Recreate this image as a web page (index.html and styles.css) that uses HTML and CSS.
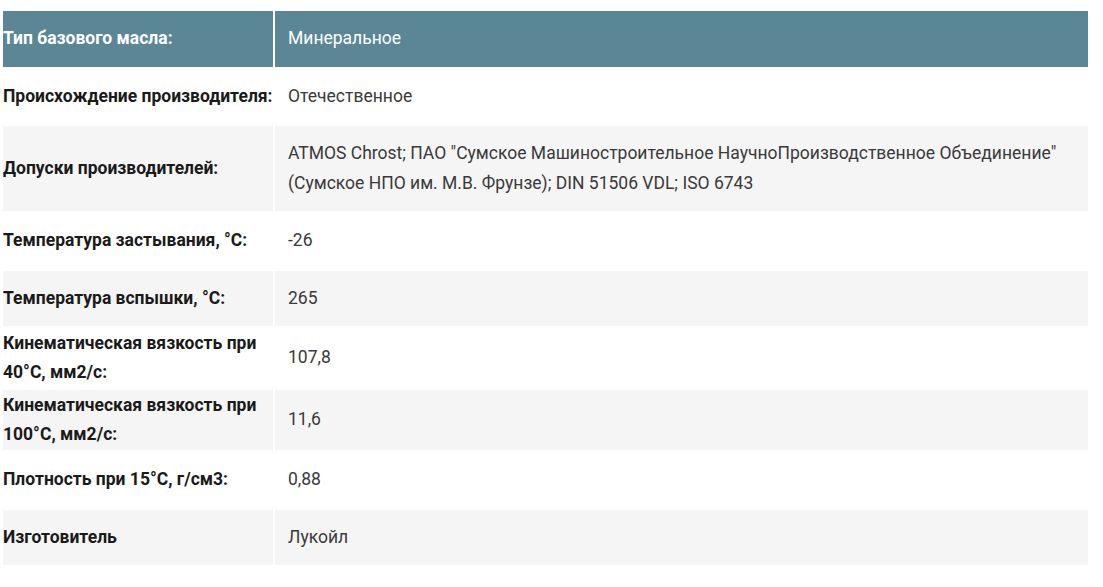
FILE: index.html
```html
<!DOCTYPE html>
<html lang="ru">
<head>
    <meta charset="UTF-8">
    <meta name="viewport" content="width=device-width, initial-scale=1.0">
    <title>Характеристики масла</title>
    <link rel="stylesheet" href="styles.css">
</head>
<body>
    <table class="specs">
        <tr class="specs-head">
            <th>Тип базового масла:</th>
            <td>Минеральное</td>
        </tr>
        <tr>
            <th>Происхождение производителя:</th>
            <td>Отечественное</td>
        </tr>
        <tr class="alt">
            <th>Допуски производителей:</th>
            <td>ATMOS Chrost; ПАО "Сумское Машиностроительное НаучноПроизводственное Объединение" (Сумское НПО им. М.В. Фрунзе); DIN 51506 VDL; ISO 6743</td>
        </tr>
        <tr>
            <th>Температура застывания, °С:</th>
            <td>-26</td>
        </tr>
        <tr class="alt">
            <th>Температура вспышки, °С:</th>
            <td>265</td>
        </tr>
        <tr>
            <th>Кинематическая вязкость при 40°С, мм2/с:</th>
            <td>107,8</td>
        </tr>
        <tr class="alt">
            <th>Кинематическая вязкость при 100°С, мм2/с:</th>
            <td>11,6</td>
        </tr>
        <tr>
            <th>Плотность при 15°С, г/см3:</th>
            <td>0,88</td>
        </tr>
        <tr class="alt">
            <th>Изготовитель</th>
            <td>Лукойл</td>
        </tr>
    </table>
</body>
</html>
```

FILE: styles.css
```css
body {
    font-family: Roboto, "Noto Sans", Arial, sans-serif;
    background-color: #fff;
    color: #333;
    margin: 0;
}
.specs {
    margin: 9px 0 0 1px;
    width: 1089px;
    border-collapse: separate;
    border-spacing: 2px;
    font-size: 17.5px;
    line-height: 29.5px;
}
.specs th {
    width: 270px;
    padding: 0.5px 0;
    text-align: left;
    font-weight: 700;
    color: #1a1a1a;
}
.specs td {
    padding: 13px 13px;
    color: #3a3a3a;
}
.specs .alt th,
.specs .alt td {
    background-color: #f5f5f5;
}
.specs-head th,
.specs-head td {
    background-color: #5b8696;
    color: #fff;
}
```
